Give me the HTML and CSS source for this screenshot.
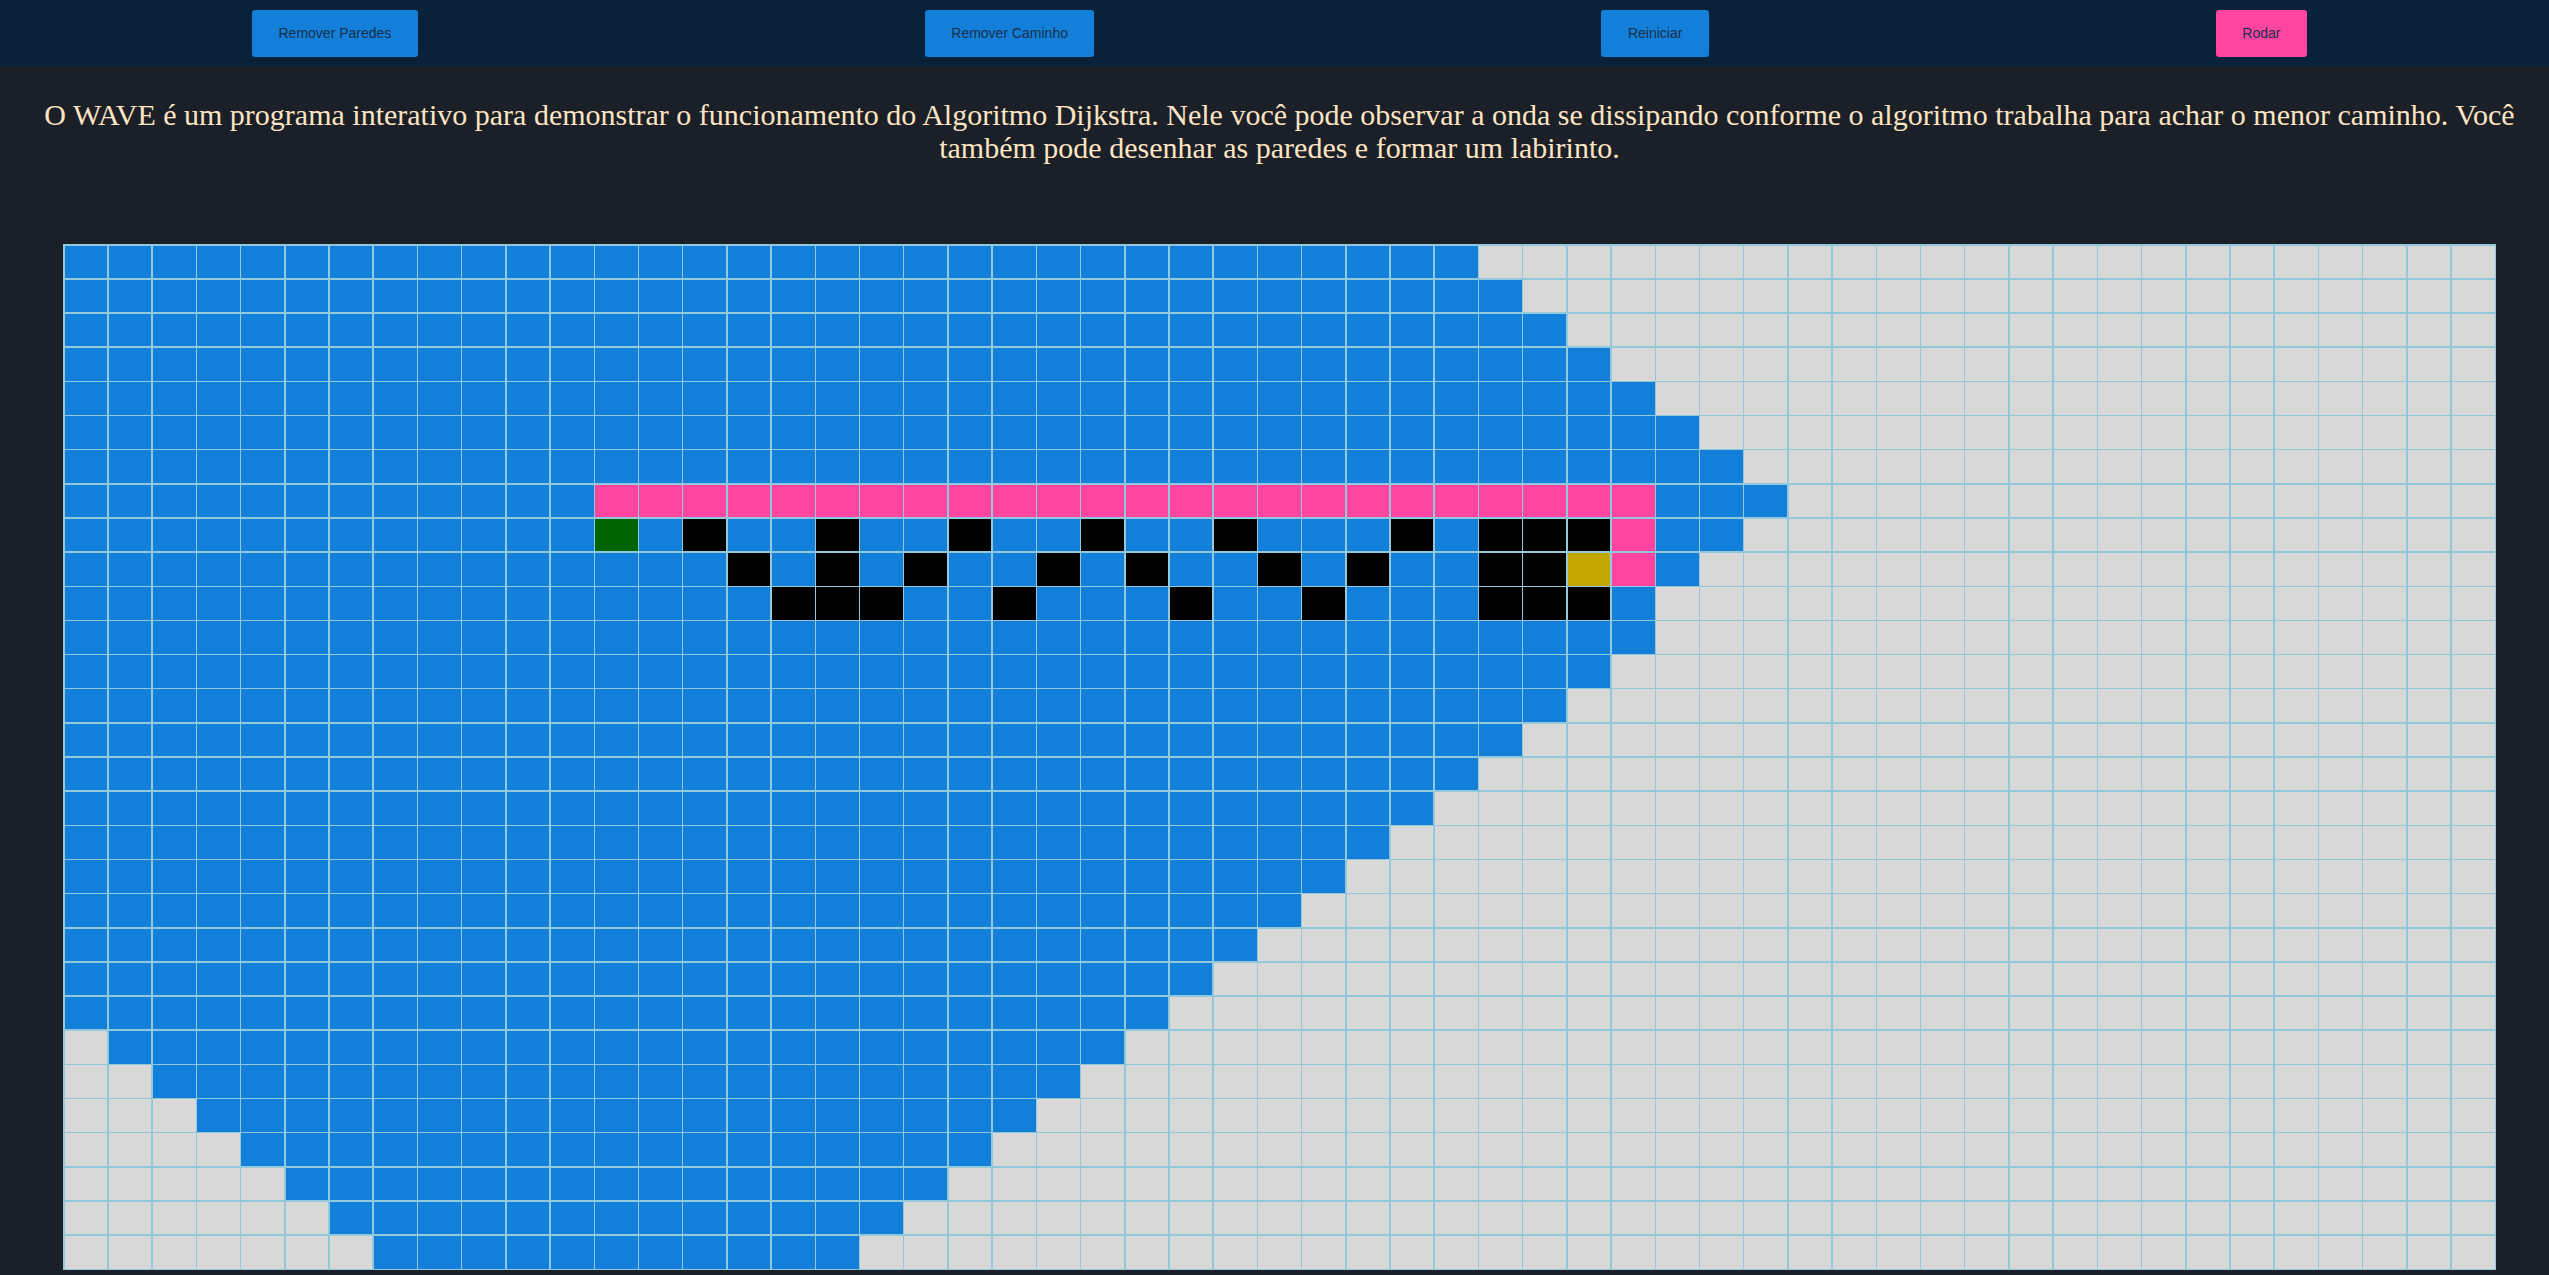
FILE: index.html
```html
<!DOCTYPE html>
<html lang="pt-BR">
<head>
<meta charset="utf-8">
<title>WAVE</title>
<link rel="stylesheet" href="styles.css">
</head>
<body>
<header class="topbar">
  <button class="btn">Remover Paredes</button>
  <button class="btn">Remover Caminho</button>
  <button class="btn">Reiniciar</button>
  <button class="btn btn-run">Rodar</button>
</header>
<p class="intro">O WAVE é um programa interativo para demonstrar o funcionamento do Algoritmo Dijkstra. Nele você pode observar a onda se dissipando conforme o algoritmo trabalha para achar o menor caminho. Você também pode desenhar as paredes e formar um labirinto.</p>
<div class="board" id="board"></div>
<script src="script.js"></script>
</body>
</html>
```

FILE: styles.css
```css
body {
  margin: 0;
  background: #1b1f27;
  font-family: "Liberation Sans", Arial, sans-serif;
}

.topbar {
  height: 66px;
  box-sizing: border-box;
  padding: 0 242px 0 252px;
  background: #0a2239;
  display: flex;
  align-items: center;
  justify-content: space-between;
}

.btn {
  border: none;
  border-radius: 3px;
  background: #147fd8;
  color: #16304c;
  font-family: "Liberation Sans", Arial, sans-serif;
  font-size: 14px;
  line-height: 17px;
  padding: 15px 26.5px;
  margin-top: 1px;
}

.btn-run {
  background: #ff45a0;
}

.intro {
  margin: 32px 3px 0 13px;
  color: #fde4c3;
  font-family: "Liberation Serif", "Times New Roman", serif;
  font-size: 30px;
  line-height: 33px;
  text-align: center;
}

.board {
  margin: 80px 0 0 63px;
  width: 2433px;
  height: 1026px;
  box-sizing: border-box;
  padding: 1.5px;
  gap: 1.5px;
  background: #92c8dc;
  display: grid;
  grid-template-columns: repeat(55, 1fr);
  grid-template-rows: repeat(30, 1fr);
}

.cell {
  background: #d8d8d8;
}

.cell.visited {
  background: #147fd8;
}

.cell.wall {
  background: #000000;
}

.cell.path {
  background: #ff45a0;
}

.cell.start {
  background: #006400;
}

.cell.end {
  background: #c4a600;
}
```

FILE: script.js
```js
(function () {
  var COLS = 55, ROWS = 30;
  var R = [32,33,34,35,36,37,38,39,38,37,36,36,35,34,33,32,31,30,29,28,27,26,25,24,23,22,21,20,19,18];
  var L = [];
  for (var i = 0; i < ROWS; i++) L.push(i < 23 ? 0 : i - 22);
  var special = {};
  for (var c = 12; c <= 35; c++) special["7," + c] = "path";
  special["8,35"] = "path";
  special["9,35"] = "path";
  special["8,12"] = "start";
  special["9,34"] = "end";
  [14,17,20,23,26,30,32,33,34].forEach(function (c) { special["8," + c] = "wall"; });
  [15,17,19,22,24,27,29,32,33].forEach(function (c) { special["9," + c] = "wall"; });
  [16,17,18,21,25,28,32,33,34].forEach(function (c) { special["10," + c] = "wall"; });
  var board = document.getElementById("board");
  var frag = document.createDocumentFragment();
  for (var r = 0; r < ROWS; r++) {
    for (var k = 0; k < COLS; k++) {
      var d = document.createElement("div");
      var cls = "cell";
      var s = special[r + "," + k];
      if (s) cls += " " + s;
      else if (k >= L[r] && k < R[r]) cls += " visited";
      d.className = cls;
      frag.appendChild(d);
    }
  }
  board.appendChild(frag);
})();
```
